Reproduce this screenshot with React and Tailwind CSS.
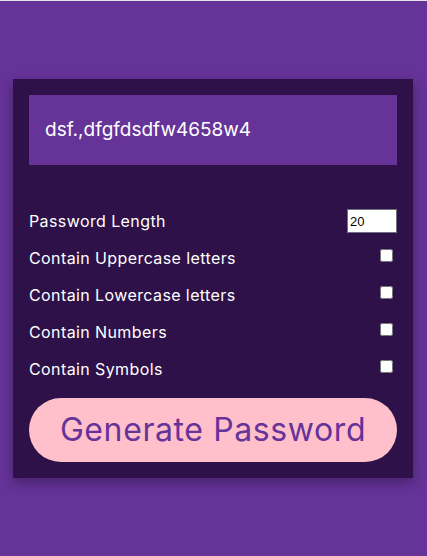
import React, { useState } from 'react';

const options = [
  'Contain Uppercase letters',
  'Contain Lowercase letters',
  'Contain Numbers',
  'Contain Symbols',
];

function App() {
  const [length, setLength] = useState(20);
  const [password] = useState('dsf.,dfgfdsdfw4658w4');

  return (
    <div className="min-h-screen bg-[#663399] border-t border-[#e6e6e6] flex items-center justify-center pr-px font-['Inter',sans-serif] text-white">
      <div className="w-[400px] bg-[#2e1149] p-4 shadow-[0_4px_12px_rgba(0,0,0,0.35)]">
        <div className="h-[70px] bg-[#663399] flex items-center px-4 text-[19px] mb-[44px]">
          {password}
        </div>
        <div className="flex flex-col gap-[13px] tracking-[0.4px]">
          <div className="h-6 flex items-center justify-between text-[16px]">
            <span>Password Length</span>
            <input
              type="number"
              value={length}
              onChange={(e) => setLength(e.target.value)}
              className="w-[50px] h-6 bg-white text-black border border-gray-500 px-[2px] text-[13px] tracking-normal font-['Liberation_Sans',sans-serif]"
            />
          </div>
          {options.map((label) => (
            <div key={label} className="h-6 flex items-center justify-between text-[16px]">
              <span>{label}</span>
              <input type="checkbox" className="w-[13px] h-[13px] mr-[4px] -mt-[6px]" />
            </div>
          ))}
        </div>
        <button className="mt-[17px] w-full h-16 rounded-full bg-[#ffc0cb] text-[#663399] text-[32px] tracking-[0.6px]">
          Generate Password
        </button>
      </div>
    </div>
  );
}

export default App;
